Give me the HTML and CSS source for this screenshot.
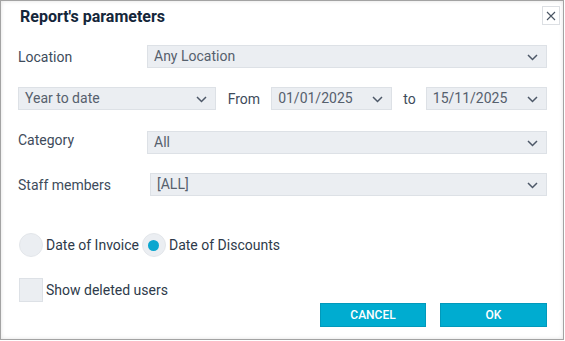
FILE: index.html
```html
<!DOCTYPE html>
<html lang="en">
<head>
    <meta charset="UTF-8">
    <title>Report's parameters</title>
    <link rel="stylesheet" href="styles.css">
</head>
<body>
    <div class="dialog">
        <div class="title-bar">
            <h1>Report's parameters</h1>
            <button class="close" type="button">
                <svg width="10" height="10" viewBox="0 0 10 10"><path d="M1 1L9 9M9 1L1 9" stroke="#4a5563" stroke-width="1.1" fill="none"/></svg>
            </button>
        </div>

        <div class="row row-location">
            <label class="label">Location</label>
            <div class="select grow">Any Location<svg class="chev" viewBox="0 0 11 7"><path d="M1 1L5.5 5.5L10 1"/></svg></div>
        </div>

        <div class="row row-period">
            <div class="select period">Year to date<svg class="chev" viewBox="0 0 11 7"><path d="M1 1L5.5 5.5L10 1"/></svg></div>
            <span class="word from">From</span>
            <div class="select date">01/01/2025<svg class="chev" viewBox="0 0 11 7"><path d="M1 1L5.5 5.5L10 1"/></svg></div>
            <span class="word to">to</span>
            <div class="select date">15/11/2025<svg class="chev" viewBox="0 0 11 7"><path d="M1 1L5.5 5.5L10 1"/></svg></div>
        </div>

        <div class="row row-category">
            <label class="label raised">Category</label>
            <div class="select grow">All<svg class="chev" viewBox="0 0 11 7"><path d="M1 1L5.5 5.5L10 1"/></svg></div>
        </div>

        <div class="row row-staff">
            <label class="label staff">Staff members</label>
            <div class="select grow">[ALL]<svg class="chev" viewBox="0 0 11 7"><path d="M1 1L5.5 5.5L10 1"/></svg></div>
        </div>

        <div class="row row-radios">
            <span class="radio"></span>
            <span class="opt">Date of Invoice</span>
            <span class="radio checked"></span>
            <span class="opt">Date of Discounts</span>
        </div>

        <div class="row row-check">
            <span class="checkbox"></span>
            <span class="opt">Show deleted users</span>
        </div>

        <div class="actions">
            <button class="button" type="button">CANCEL</button>
            <button class="button" type="button">OK</button>
        </div>
    </div>
</body>
</html>
```

FILE: styles.css
```css
body {
    margin: 0;
    font-family: Roboto, 'Liberation Sans', sans-serif;
    background-color: #ffffff;
    color: #3e4b5b;
}
.dialog {
    box-sizing: border-box;
    width: 564px;
    height: 340px;
    border: 1px solid #a3a3a3;
    box-shadow: inset 0 0 4px rgba(0, 0, 0, 0.12);
    padding: 0 16px 0 17px;
}
.title-bar {
    display: flex;
    align-items: flex-start;
    justify-content: space-between;
    height: 44px;
}
h1 {
    margin: 6px 0 0 2px;
    font-size: 16px;
    font-weight: bold;
    color: #14263a;
    line-height: 20px;
}
.close {
    width: 18px;
    height: 19px;
    margin: 5px -13px 0 0;
    padding: 0;
    border: 1px solid #dcdfe3;
    background: #ffffff;
    display: flex;
    align-items: center;
    justify-content: center;
}
.row {
    display: flex;
    align-items: center;
}
.label {
    width: 129px;
    flex-shrink: 0;
    font-size: 14px;
}
.label.staff {
    width: 132px;
}
.label.raised {
    margin-bottom: 6px;
}
.select {
    position: relative;
    box-sizing: border-box;
    height: 23px;
    line-height: 21px;
    padding-left: 6px;
    background-color: #ebeef2;
    border: 1px solid #dde1e6;
    font-size: 14px;
    color: #56606d;
}
.grow {
    flex: 1;
}
.chev {
    position: absolute;
    right: 8px;
    top: 8px;
    width: 11px;
    height: 7px;
    fill: none;
    stroke: #4d5868;
    stroke-width: 1.5;
}
.row-period {
    margin-top: 19px;
}
.period {
    width: 199px;
}
.date {
    width: 122px;
}
.word {
    font-size: 14px;
}
.from {
    margin: 0 11px 0 12px;
}
.to {
    margin: 0 10px 0 11px;
}
.row-category {
    margin-top: 21px;
}
.row-staff {
    margin-top: 19px;
}
.row-radios {
    margin-top: 37px;
    padding-left: 1px;
}
.radio {
    box-sizing: border-box;
    width: 24px;
    height: 24px;
    border-radius: 50%;
    background-color: #ebeef2;
    border: 1px solid #e3e6ea;
    display: flex;
    align-items: center;
    justify-content: center;
    margin-right: 3px;
}
.radio.checked::after {
    content: '';
    width: 11px;
    height: 11px;
    border-radius: 50%;
    background-color: #0aa6cf;
}
.opt {
    font-size: 14px;
    color: #2e3a4a;
    margin-right: 3px;
}
.row-check {
    margin-top: 21px;
    padding-left: 1px;
}
.checkbox {
    box-sizing: border-box;
    width: 24px;
    height: 24px;
    background-color: #ebeef2;
    border: 1px solid #dde1e6;
    margin-right: 3px;
}
.actions {
    display: flex;
    justify-content: flex-end;
    gap: 14px;
    margin-top: 1px;
}
.button {
    box-sizing: border-box;
    width: 107px;
    height: 24px;
    padding: 0;
    background-color: #00acd0;
    border: 1px solid #0199bb;
    color: #ffffff;
    font-family: Roboto, 'Liberation Sans', sans-serif;
    font-size: 12px;
    font-weight: 500;
}
.button:first-child {
    width: 106px;
}
```
